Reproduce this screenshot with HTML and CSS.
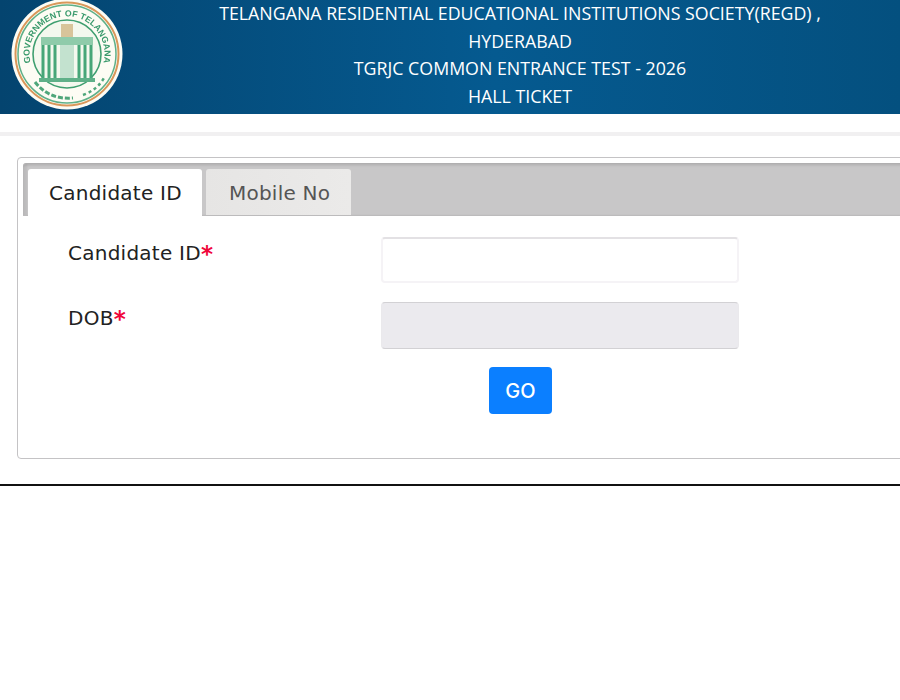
FILE: index.html
```html
<!DOCTYPE html>
<html lang="en">
<head>
<meta charset="utf-8">
<title>Hall Ticket</title>
<link rel="stylesheet" href="styles.css">
</head>
<body>
<header class="banner">
  <div class="logo-col">
    <svg class="logo" viewBox="0 0 112 112" width="112" height="112">
      <defs>
        <path id="arcTop" d="M20.8 68.8 A37.5 37.5 0 1 1 91.2 68.8"/>
      </defs>
      <circle cx="56" cy="56" r="55.5" fill="#fdfcf4"/>
      <circle cx="56" cy="56" r="51.5" fill="none" stroke="#d9975a" stroke-width="2"/>
      <circle cx="56" cy="56" r="49" fill="none" stroke="#5fb088" stroke-width="1.5"/>
      <circle cx="56" cy="56" r="34" fill="#f4f8ee" stroke="#3f9f70" stroke-width="1.6"/>
      <text class="seal-text"><textPath href="#arcTop" startOffset="50%" text-anchor="middle">GOVERNMENT OF TELANGANA</textPath></text>
      <path d="M24 84 Q38 102 62 100" fill="none" stroke="#4fa67a" stroke-width="3" stroke-dasharray="5 2"/>
      <path d="M72 97 Q86 92 93 80" fill="none" stroke="#4fa67a" stroke-width="2.5" stroke-dasharray="3 3"/>
      <rect x="50" y="26" width="12" height="13" fill="#d8c49a"/>
      <path d="M30 39 H82 V47 H30Z" fill="#8fcbaa"/>
      <path d="M32 47 V80 M38 47 V80 M44 47 V80 M68 47 V80 M74 47 V80 M80 47 V80" stroke="#47a678" stroke-width="3" fill="none"/>
      <path d="M49 47 H63 V80 H49Z" fill="#c3e2cf"/>
      <path d="M28 80 H84 V84 H28Z" fill="#5fb088"/>
    </svg>
  </div>
  <div class="titles">
    <p>TELANGANA RESIDENTIAL EDUCATIONAL INSTITUTIONS SOCIETY(REGD) ,</p>
    <p>HYDERABAD</p>
    <p>TGRJC COMMON ENTRANCE TEST - 2026</p>
    <p>HALL TICKET</p>
  </div>
</header>
<div class="rule-light"></div>
<main class="panel">
  <div class="tabs">
    <nav class="tab-bar">
      <span class="tab tab-active">Candidate ID</span>
      <span class="tab">Mobile No</span>
    </nav>
    <form class="form">
      <label class="field-label" for="cid">Candidate ID<span class="req">*</span></label>
      <input class="field" id="cid" type="text">
      <label class="field-label" for="dob">DOB<span class="req">*</span></label>
      <input class="field field-disabled" id="dob" type="text" readonly>
      <div class="actions"><button class="go" type="button">GO</button></div>
    </form>
  </div>
</main>
<hr class="rule-dark">
</body>
</html>
```

FILE: styles.css
```css
html, body {
  margin: 0;
  padding: 0;
  background: #fff;
  overflow: hidden;
}
body {
  width: 900px;
  height: 700px;
  font-family: "DejaVu Sans", sans-serif;
}
.banner {
  display: flex;
  height: 114px;
  background: linear-gradient(90deg, #04446f 0%, #055a90 55%, #04507f 100%);
}
.logo-col {
  width: 140px;
  flex: none;
  padding: 0 0 0 11px;
  box-sizing: border-box;
}
.logo {
  display: block;
  margin-top: -2px;
  filter: blur(0.4px);
}
.seal-text {
  font-family: "Liberation Sans", sans-serif;
  font-size: 8.8px;
  font-weight: 700;
  fill: #3a9a6c;
}
.titles {
  flex: 1;
  text-align: center;
  color: #fff;
  font-family: "Open Sans", sans-serif;
  font-size: 17.8px;
  line-height: 27.5px;
  white-space: nowrap;
}
.titles p {
  margin: 0;
}
.rule-light {
  height: 4px;
  margin-top: 18px;
  background: #f1f0f1;
}
.panel {
  margin: 21px 0 0 17px;
  width: 1000px;
  height: 302px;
  box-sizing: border-box;
  padding: 5px;
  border: 1px solid #c4c3c5;
  border-radius: 4px;
}
.tab-bar {
  display: flex;
  align-items: flex-end;
  gap: 4px;
  height: 53px;
  box-sizing: border-box;
  padding: 5px 0 0 5px;
  background: #c8c7c8;
  border-radius: 3px 3px 0 0;
  border-top: 1px solid #b0afb0;
  border-bottom: 1px solid #bcbbbc;
  box-shadow: inset 0 2px 2px rgba(0, 0, 0, 0.08), inset 4px 0 2px rgba(0, 0, 0, 0.06);
}
.tab {
  display: block;
  height: 46px;
  box-sizing: border-box;
  padding: 0 21px 0 23px;
  font-size: 20px;
  letter-spacing: 0.25px;
  line-height: 49px;
  color: #555;
  background: linear-gradient(90deg, #e6e5e4, #ebeae9);
  border-radius: 3px 3px 0 0;
}
.tab-active {
  color: #222;
  background: #fff;
  padding: 0 20px 0 21px;
  margin-bottom: -1px;
  height: 47px;
}
.form {
  display: grid;
  grid-template-columns: 313px 358px;
  grid-auto-rows: min-content;
  row-gap: 19px;
  padding: 21px 0 0 45px;
}
.field-label {
  font-size: 20px;
  letter-spacing: 0.25px;
  line-height: 32px;
  color: #222;
}
.req {
  color: #f0063a;
  font-size: 23px;
  font-weight: 700;
  line-height: 1;
  vertical-align: -2px;
}
.field {
  display: block;
  height: 46px;
  width: 358px;
  box-sizing: border-box;
  margin: 0;
  border: 2px solid #f5f3f6;
  border-top-color: #e3e1e4;
  border-radius: 4px;
  background: #fff;
  outline: none;
}
.field-disabled {
  height: 47px;
  background: #ebeaee;
  border: 1px solid #eae9ec;
  border-top-color: #d2d1d4;
  border-bottom-color: #d2d1d4;
}
.actions {
  grid-column: 1 / -1;
  padding-left: 421px;
  margin-top: -1px;
}
.go {
  display: block;
  width: 63px;
  height: 47px;
  border: 0;
  border-radius: 4px;
  background: #0b7fff;
  color: #fff;
  font-family: Inter, sans-serif;
  font-size: 20px;
  font-weight: 500;
  padding: 0;
}
.rule-dark {
  margin: 25px 0 0;
  height: 2px;
  border: 0;
  background: #111;
}
```
